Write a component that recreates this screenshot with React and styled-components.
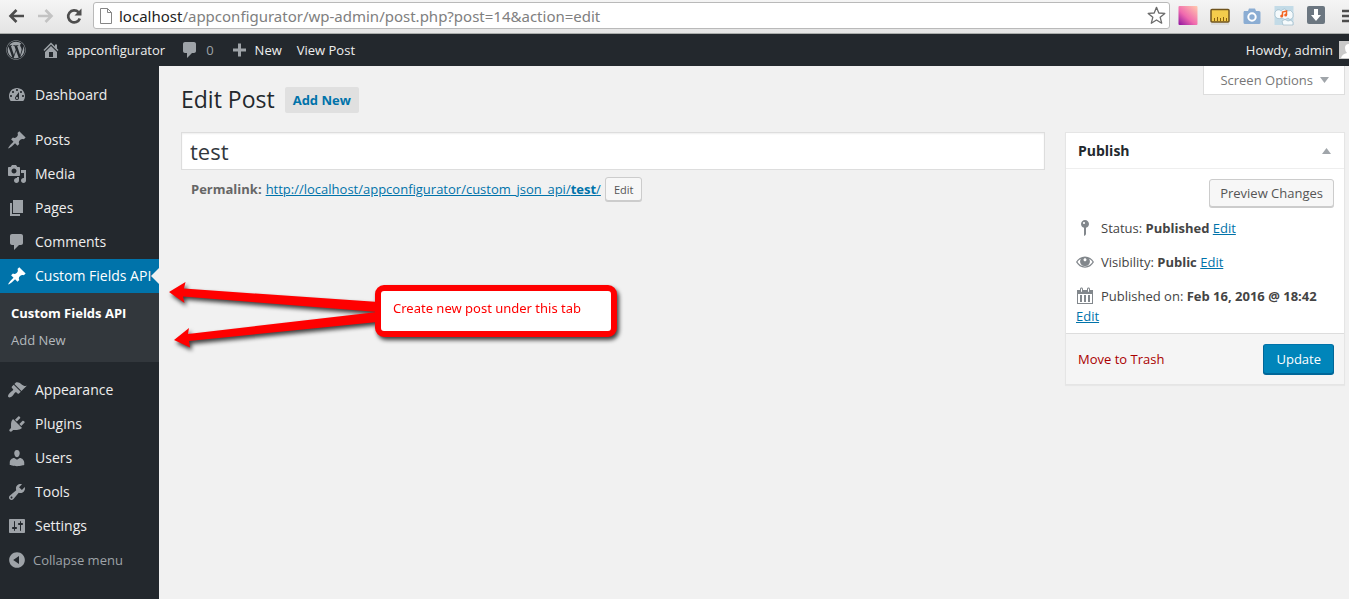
import { useState } from "react"
import styled, { createGlobalStyle } from "styled-components"
import { FaWordpress } from "react-icons/fa"

const GlobalStyle = createGlobalStyle`
  * {
    box-sizing: border-box;
  }

  body {
    margin: 0;
    background: #f1f1f1;
    color: #444;
    font-family: "Open Sans", "Noto Sans", sans-serif;
    font-size: 13px;
    line-height: 20px;
    overflow-x: hidden;
  }

  button, input {
    font-family: inherit;
  }

  svg {
    display: block;
    flex: none;
  }
`

const Page = styled.div`
  display: flex;
  flex-direction: column;
  min-height: 100vh;
`

/* browser toolbar */

const BrowserBar = styled.div`
  display: flex;
  align-items: center;
  height: 34px;
  padding: 0 0 2px 6px;
  background: linear-gradient(#f5f5f5, #e4e4e4);
  border-bottom: 1px solid #a9acaa;
  overflow: hidden;
`

const NavButtons = styled.div`
  display: flex;
  gap: 9px;
  margin-right: 9px;
`

const IconButton = styled.button`
  display: flex;
  padding: 0;
  border: 0;
  background: none;
`

const AddressBar = styled.div`
  display: flex;
  flex: 1;
  align-items: center;
  height: 27px;
  padding: 0 3px 0 5px;
  border: 1px solid #b9b9b9;
  border-radius: 3px;
  background: #fff;
`

const Address = styled.div`
  flex: 1;
  margin-left: 6px;
  color: #808080;
  font-family: "Noto Sans", "Open Sans", sans-serif;
  font-size: 15px;
  line-height: 24px;
  white-space: nowrap;
  outline: 0;
`

const Host = styled.span`
  color: #222;
`

const Extensions = styled.div`
  display: flex;
  gap: 12px;
  width: 179px;
  padding-left: 8px;
`

/* admin bar */

const AdminBar = styled.nav`
  display: flex;
  align-items: center;
  height: 32px;
  background: #23282d;
  overflow: hidden;
`

const BarLink = styled.a`
  display: flex;
  align-items: center;
  gap: 6px;
  padding: 0 8px 0 7px;
  color: ${(props) => (props.$muted ? "#9ea3a8" : "#eee")};
  line-height: 32px;
  text-decoration: none;

  svg {
    color: #9ea3a8;
  }
`

const LogoLink = styled(BarLink)`
  padding: 0 8px 0 6px;
`

const Account = styled(BarLink)`
  margin-left: auto;
  padding-right: 0;
`

/* side menu */

const Body = styled.div`
  display: flex;
  flex: 1;
`

const SideMenu = styled.nav`
  flex: none;
  width: 159px;
  padding: 12px 0;
  background: #23282d;
`

const MenuGroup = styled.div`
  margin-bottom: 11px;
`

const MenuLink = styled.a`
  position: relative;
  display: flex;
  align-items: center;
  gap: 8px;
  height: 34px;
  padding-left: 7px;
  background: ${(props) => (props.$active ? "#0073aa" : "transparent")};
  color: ${(props) => (props.$active ? "#fff" : "#eee")};
  font-size: 14px;
  text-decoration: none;
  white-space: nowrap;

  svg {
    color: ${(props) => (props.$active ? "#fff" : "#9ea3a8")};
  }
`

const ActiveMark = styled.span`
  position: absolute;
  top: 9px;
  right: 0;
  border: 8px solid transparent;
  border-left-width: 0;
  border-right-color: #f1f1f1;
`

const SubMenu = styled.div`
  padding: 7px 0 8px;
  background: #32373c;
`

const SubLink = styled.a`
  display: block;
  padding: 0 11px;
  color: ${(props) => (props.$current ? "#fff" : "#b4b9be")};
  font-weight: ${(props) => (props.$current ? 700 : 400)};
  line-height: 27px;
  text-decoration: none;
`

const CollapseButton = styled.button`
  display: flex;
  align-items: center;
  gap: 6px;
  height: 34px;
  padding: 0 0 0 7px;
  border: 0;
  background: none;
  color: #9ea3a8;
  font-size: 13px;
`

/* content */

const Content = styled.main`
  position: relative;
  flex: 1;
  min-width: 0;
  padding: 0 4px 20px 22px;
`

const Header = styled.header`
  display: flex;
  justify-content: space-between;
  align-items: flex-start;
`

const TitleGroup = styled.div`
  display: flex;
  align-items: flex-start;
  gap: 10px;
  padding: 21px 0 19px;
`

const Title = styled.h1`
  margin: 0;
  color: #23282d;
  font-size: 23px;
  font-weight: 400;
  line-height: 24px;
`

const AddNew = styled.a`
  padding: 0 8px;
  border-radius: 2px;
  background: #e0e0e0;
  color: #0073aa;
  font-weight: 700;
  line-height: 26px;
  text-decoration: none;
`

const ScreenOptions = styled.button`
  display: flex;
  align-items: center;
  gap: 7px;
  height: 29px;
  padding: 0 15px 0 16px;
  border: 1px solid #ddd;
  border-top: 0;
  background: #fff;
  color: #777;
  font-size: 13px;
`

const Columns = styled.div`
  display: grid;
  grid-template-columns: minmax(0, 1fr) 280px;
  gap: 20px;
  align-items: start;
`

const TitleInput = styled.input`
  display: block;
  width: 100%;
  height: 38px;
  padding: 3px 8px;
  border: 1px solid #ddd;
  background: #fff;
  box-shadow: inset 0 1px 2px rgba(0, 0, 0, 0.07);
  color: #32373c;
  font-size: 22px;
  outline: 0;
`

const Permalink = styled.div`
  display: flex;
  align-items: center;
  gap: 4px;
  padding: 7px 10px 0;
  color: #666;
`

const Link = styled.a`
  color: #0073aa;
`

const Button = styled.button`
  height: ${(props) => (props.$small ? "24px" : "28px")};
  padding: 0 ${(props) => (props.$small ? "8px" : "10px")};
  border: 1px solid #ccc;
  border-radius: 3px;
  background: #f7f7f7;
  box-shadow: 0 1px 0 #ccc;
  color: #555;
  font-size: ${(props) => (props.$small ? "11px" : "13px")};
`

const PrimaryButton = styled(Button)`
  height: 30px;
  padding: 0 12px;
  border-color: #0073aa #006799 #006799;
  background: #0085ba;
  box-shadow: 0 1px 0 #006799;
  color: #fff;
`

const Box = styled.section`
  border: 1px solid #e5e5e5;
  background: #fff;
  box-shadow: 0 1px 1px rgba(0, 0, 0, 0.04);
`

const BoxHeader = styled.div`
  display: flex;
  justify-content: space-between;
  align-items: center;
  height: 36px;
  padding: 0 13px 0 12px;
  border-bottom: 1px solid #eee;
`

const BoxTitle = styled.h2`
  margin: 0;
  color: #23282d;
  font-size: 14px;
  font-weight: 700;
`

const PreviewRow = styled.div`
  display: flex;
  justify-content: flex-end;
  padding: 10px 10px 5px;
`

const InfoRow = styled.div`
  padding: 6px 10px 8px;

  svg {
    display: inline-block;
    margin: 0 6px 0 -1px;
    color: #82878c;
    vertical-align: top;
  }

  &:last-of-type {
    padding-bottom: 7px;
  }
`

const BoxFooter = styled.footer`
  display: flex;
  justify-content: space-between;
  align-items: center;
  padding: 10px 10px 10px 12px;
  border-top: 1px solid #ddd;
  background: #f5f5f5;
`

const TrashLink = styled.a`
  color: #a00;
  text-decoration: none;
`

/* note drawn over the page */

const Note = styled.div`
  position: absolute;
  top: 212px;
  left: 6px;
  display: flex;
  filter: drop-shadow(2px 3px 2px rgba(0, 0, 0, 0.75));
`

const NoteText = styled.div`
  width: 242px;
  height: 52px;
  margin-top: 7px;
  padding: 7px 12px;
  border: 6px solid #f00;
  border-radius: 9px;
  background: #fff;
  color: #f00;
  font-family: "Noto Sans", "Open Sans", sans-serif;
`

const icons = {
  dashboard: "M3.76 16h12.48c1.1-1.37 1.76-3.11 1.76-5 0-4.42-3.58-8-8-8s-8 3.58-8 8c0 1.89.66 3.63 1.76 5zM10 4c.55 0 1 .45 1 1s-.45 1-1 1-1-.45-1-1 .45-1 1-1zM6 6c.55 0 1 .45 1 1s-.45 1-1 1-1-.45-1-1 .45-1 1-1zm8 0c.55 0 1 .45 1 1s-.45 1-1 1-1-.45-1-1 .45-1 1-1zm-5.37 5.55L12 7v6c0 1.1-.9 2-2 2s-2-.9-2-2c0-.57.24-1.08.63-1.45zM4 10c.55 0 1 .45 1 1s-.45 1-1 1-1-.45-1-1 .45-1 1-1zm12 0c.55 0 1 .45 1 1s-.45 1-1 1-1-.45-1-1 .45-1 1-1zm-5 3c0-.55-.45-1-1-1s-1 .45-1 1 .45 1 1 1 1-.45 1-1z",
  pin: "M10.44 3.02l1.82-1.82 6.36 6.35-1.83 1.82c-1.05-.68-2.48-.57-3.41.36l-.75.75c-.92.93-1.04 2.35-.35 3.41l-1.83 1.82-2.41-2.41-2.8 2.79c-.42.42-3.38 2.71-3.8 2.29s1.86-3.39 2.28-3.81l2.79-2.79L4.1 9.36l1.83-1.82c1.05.69 2.48.57 3.4-.36l.75-.75c.93-.92 1.05-2.35.36-3.41z",
  media: "M13 11V4c0-.55-.45-1-1-1h-1.67L9 1H5L3.67 3H2c-.55 0-1 .45-1 1v7c0 .55.45 1 1 1h10c.55 0 1-.45 1-1zM7 4.5c1.38 0 2.5 1.12 2.5 2.5S8.38 9.5 7 9.5 4.5 8.38 4.5 7 5.62 4.5 7 4.5zM14 6h5v10.5c0 1.38-1.12 2.5-2.5 2.5S14 17.88 14 16.5s1.12-2.5 2.5-2.5c.17 0 .34.02.5.05V9h-3V6zm-4 8.05V13h2v3.5c0 1.38-1.12 2.5-2.5 2.5S7 17.88 7 16.5 8.12 14 9.5 14c.17 0 .34.02.5.05z",
  page: "M6 15V2h10v13H6zm-1 1h8v2H3V5h2v11z",
  comment: "M5 2h9c1.1 0 2 .9 2 2v7c0 1.1-.9 2-2 2h-2l-5 5v-5H5c-1.1 0-2-.9-2-2V4c0-1.1.9-2 2-2z",
  appearance: "M14.48 11.06L7.41 3.99l1.5-1.5c.5-.56 2.3-.47 3.51.32 1.21.8 1.43 1.28 2.91 2.1 1.18.64 2.45 1.26 4.45.85zm-.71.71L6.7 4.7 4.93 6.47c-.39.39-.39 1.02 0 1.41l1.06 1.06c.39.39.39 1.03 0 1.42-.6.6-1.43 1.11-2.21 1.69-.35.26-.7.53-1.01.84C1.43 14.23.4 16.08 1.4 17.07c.99 1 2.84-.03 4.18-1.36.31-.31.58-.66.85-1.02.57-.78 1.08-1.61 1.69-2.21.39-.39 1.02-.39 1.41 0l1.06 1.06c.39.39 1.02.39 1.41 0z",
  plugin: "M13.11 4.36L9.87 7.6 8 5.73l3.24-3.24c.35-.34 1.05-.2 1.56.32.52.51.66 1.21.31 1.55zm-8 1.77l.91-1.12 9.01 9.01-1.19.84c-.71.71-2.63 1.16-3.82 1.16H6.14L4.9 17.26c-.59.59-1.54.59-2.12 0-.59-.58-.59-1.53 0-2.12l1.24-1.24v-3.88c0-1.13.4-3.19 1.09-3.89zm7.26 3.97l3.24-3.24c.34-.35 1.04-.21 1.55.31.52.51.66 1.21.31 1.55l-3.24 3.25z",
  users: "M10 9.25c-2.27 0-2.73-3.44-2.73-3.44C7 4.02 7.82 2 9.97 2c2.16 0 2.98 2.02 2.71 3.81 0 0-.41 3.44-2.68 3.44zm0 2.57L12.72 10c2.39 0 4.52 2.33 4.52 4.53v2.49s-3.65 1.13-7.24 1.13c-3.65 0-7.24-1.13-7.24-1.13v-2.49c0-2.25 1.94-4.48 4.47-4.48z",
  tools: "M16.68 9.77c-1.34 1.34-3.3 1.67-4.95.99l-5.41 6.52c-.99.99-2.59.99-3.58 0s-.99-2.59 0-3.57l6.52-5.42c-.68-1.65-.35-3.61.99-4.95 1.28-1.28 3.12-1.62 4.72-1.06l-2.89 2.89 2.82 2.82 2.86-2.87c.53 1.58.18 3.39-1.08 4.65zM3.81 16.21c.4.39 1.04.39 1.43 0 .4-.4.4-1.04 0-1.43-.39-.4-1.03-.4-1.43 0-.39.39-.39 1.03 0 1.43z",
  settings: "M18 16V4c0-.55-.45-1-1-1H3c-.55 0-1 .45-1 1v12c0 .55.45 1 1 1h14c.55 0 1-.45 1-1zM8 11h1c.55 0 1 .45 1 1s-.45 1-1 1H8v1.5c0 .28-.22.5-.5.5s-.5-.22-.5-.5V13H6c-.55 0-1-.45-1-1s.45-1 1-1h1V5.5c0-.28.22-.5.5-.5s.5.22.5.5V11zm5-2h-1c-.55 0-1-.45-1-1s.45-1 1-1h1V5.5c0-.28.22-.5.5-.5s.5.22.5.5V7h1c.55 0 1 .45 1 1s-.45 1-1 1h-1v5.5c0 .28-.22.5-.5.5s-.5-.22-.5-.5V9z",
  collapse: "M10 2.16c4.33 0 7.84 3.51 7.84 7.84s-3.51 7.84-7.84 7.84S2.16 14.33 2.16 10 5.71 2.16 10 2.16zm2 11.72V6.12L6.18 9.97z",
  home: "M16 8.5l1.53 1.53-1.06 1.06L10 4.6l-6.47 6.49-1.06-1.06L10 2.5l4 4v-2h2v4zm-6-2.46l6 5.99V18H4v-5.97zM12 17v-5H8v5h4z",
  plus: "M17 8.5v3h-5v5H9v-5H4v-3h5v-5h3v5z",
  status: "M14 6c0 1.86-1.28 3.41-3 3.86V16c0 1-2 2-2 2V9.86c-1.72-.45-3-2-3-3.86 0-2.21 1.79-4 4-4s4 1.79 4 4zM8 5c0 .55.45 1 1 1s1-.45 1-1-.45-1-1-1-1 .45-1 1z",
  eye: "M10 4.5c4 0 7 2.3 9 5.5-2 3.5-5 5.7-9 5.7S3 13.5 1 10c2-3.2 5-5.5 9-5.5zM5.9 6.8C4.4 7.6 3.2 8.8 2.5 10c1.7 2.6 4.3 4.4 7.5 4.4s5.8-1.8 7.5-4.4c-.7-1.2-1.9-2.4-3.4-3.2.5.8.8 1.7.8 2.6 0 2.7-2.2 4.7-4.9 4.7s-4.9-2-4.9-4.7c0-.9.3-1.8.8-2.6zM10 6.3c-.8 0-1.5.7-1.5 1.5S9.2 9.3 10 9.3s1.5-.7 1.5-1.5S10.8 6.3 10 6.3z",
  calendar: "M15 4h3v14H2V4h3V3c0-.83.67-1.5 1.5-1.5S8 2.17 8 3v1h4V3c0-.83.67-1.5 1.5-1.5S15 2.17 15 3v1zM6 3v2.5c0 .28.22.5.5.5s.5-.22.5-.5V3c0-.28-.22-.5-.5-.5S6 2.72 6 3zm7 0v2.5c0 .28.22.5.5.5s.5-.22.5-.5V3c0-.28-.22-.5-.5-.5s-.5.22-.5.5zm4 14V8H3v9h14zM7 16V9H5v7h2zm4 0V9H9v7h2zm4 0V9h-2v7h2z",
}

const firstMenu = [
  { icon: "pin", label: "Posts" },
  { icon: "media", label: "Media" },
  { icon: "page", label: "Pages" },
  { icon: "comment", label: "Comments" },
]

const lastMenu = [
  { icon: "appearance", label: "Appearance" },
  { icon: "plugin", label: "Plugins" },
  { icon: "users", label: "Users" },
  { icon: "tools", label: "Tools" },
  { icon: "settings", label: "Settings" },
]

function Icon({ name }) {
  return (
    <svg width="20" height="20" viewBox="0 0 20 20" fill="currentColor" fillRule="evenodd" aria-hidden="true">
      <path d={icons[name]} />
    </svg>
  )
}

function Triangle({ up }) {
  return (
    <svg width="9" height="6" viewBox="0 0 9 6" fill="#a0a5aa" aria-hidden="true">
      <path d={up ? "M4.5 0L9 6H0z" : "M0 0h9L4.5 6z"} />
    </svg>
  )
}

function Browser() {
  return (
    <BrowserBar>
      <NavButtons>
        <IconButton aria-label="Back">
          <svg width="20" height="20" viewBox="0 0 20 20" fill="none" stroke="#4d4d4d" strokeWidth="2.6">
            <path d="M18 10H5M10.5 4L4.5 10l6 6" />
          </svg>
        </IconButton>
        <IconButton aria-label="Forward">
          <svg width="20" height="20" viewBox="0 0 20 20" fill="none" stroke="#c3c3c3" strokeWidth="2.6">
            <path d="M3 10h13M10.5 4l6 6-6 6" />
          </svg>
        </IconButton>
        <IconButton aria-label="Reload">
          <svg width="20" height="20" viewBox="0 0 20 20">
            <path d="M14.5 6.2A6 6 0 1 0 15.8 12.5" fill="none" stroke="#4d4d4d" strokeWidth="2.7" />
            <path d="M17.5 2.5v7h-7z" fill="#4d4d4d" />
          </svg>
        </IconButton>
      </NavButtons>
      <AddressBar>
        <svg width="14" height="18" viewBox="0 0 14 18" fill="#fff" stroke="#858585">
          <path d="M1.5 1.5h7l4 4v11h-11zM8.5 1.5v4h4" />
        </svg>
        <Address role="textbox" aria-label="Address" contentEditable suppressContentEditableWarning spellCheck={false}>
          <Host>localhost</Host>/appconfigurator/wp-admin/post.php?post=14&amp;action=edit
        </Address>
        <IconButton aria-label="Bookmark this page">
          <svg width="19" height="19" viewBox="0 0 19 19" fill="#fff" stroke="#6b6b6b" strokeWidth="1.3" strokeLinejoin="round">
            <path d="M9.5 1.3l2.3 5.7 6 .4-4.6 3.9 1.5 5.9-5.2-3.2-5.2 3.2 1.5-5.9L1.2 7.4l6-.4z" />
          </svg>
        </IconButton>
      </AddressBar>
      <Extensions>
        <IconButton aria-label="Color picker">
          <svg width="20" height="20" viewBox="0 0 20 20">
            <defs>
              <linearGradient id="swatch" x1="0" y1="1" x2="0.9" y2="0">
                <stop offset="0" stopColor="#8d13a0" />
                <stop offset="0.45" stopColor="#f06aae" />
                <stop offset="1" stopColor="#ffc3ad" />
              </linearGradient>
            </defs>
            <rect x="0.5" y="0" width="19" height="19" rx="1" fill="url(#swatch)" />
          </svg>
        </IconButton>
        <IconButton aria-label="Ruler">
          <svg width="20" height="20" viewBox="0 0 20 20">
            <path d="M1 18h18" stroke="#ccc" />
            <rect x="1" y="3.5" width="18" height="12.5" rx="1" fill="#f4cc4c" stroke="#6f531c" strokeWidth="1.5" />
            <path d="M4.5 15v-3M7.5 15v-4M10.5 15v-3M13.5 15v-4M16.5 15v-3" stroke="#8a5f10" />
          </svg>
        </IconButton>
        <IconButton aria-label="Screenshot">
          <svg width="20" height="20" viewBox="0 0 20 20">
            <path d="M2 5h4l1-2.5h6L14 5h3a1.5 1.5 0 0 1 1.5 1.5v10A1.5 1.5 0 0 1 17 18H3a1.5 1.5 0 0 1-1.5-1.5v-10z" fill="#8badd3" />
            <circle cx="10" cy="11" r="3.7" fill="#8badd3" stroke="#fff" strokeWidth="2" />
          </svg>
        </IconButton>
        <IconButton aria-label="Music cloud">
          <svg width="20" height="20" viewBox="0 0 20 20">
            <rect x="0.5" y="0" width="19" height="19" fill="#c3dbe7" />
            <path d="M1 6q3-4 6-1 4-4 6 0 4-2 6 2v4q-2 4-5 1-3 3-6 0-5 2-7-2zM8 15q3-3 6 0 3-2 5 1v3H9z" fill="#f5fafc" stroke="#8eafc0" strokeWidth="0.6" />
            <path d="M8.5 10V6l4-1v4" fill="none" stroke="#f26522" strokeWidth="1.5" />
            <circle cx="7.7" cy="10" r="1.5" fill="#f26522" />
            <circle cx="11.7" cy="9" r="1.5" fill="#f26522" />
          </svg>
        </IconButton>
        <IconButton aria-label="Downloads">
          <svg width="20" height="20" viewBox="0 0 20 20">
            <rect x="1" y="0" width="18" height="18" rx="2" fill="#6b7680" />
            <path d="M8 3h4v6h3l-5 6-5-6h3z" fill="#fff" />
          </svg>
        </IconButton>
        <IconButton aria-label="Browser menu">
          <svg width="20" height="20" viewBox="0 0 20 20" stroke="#4d4d4d" strokeWidth="2.5">
            <path d="M4 5h14M4 10h14M4 15h14" />
          </svg>
        </IconButton>
      </Extensions>
    </BrowserBar>
  )
}

function MenuItem({ icon, label, active }) {
  return (
    <MenuLink href="#" $active={active}>
      <Icon name={icon} />
      {label}
      {active && <ActiveMark />}
    </MenuLink>
  )
}

function Menu() {
  return (
    <SideMenu>
      <MenuGroup>
        <MenuItem icon="dashboard" label="Dashboard" />
      </MenuGroup>
      <MenuGroup>
        {firstMenu.map((item) => (
          <MenuItem key={item.label} {...item} />
        ))}
        <MenuItem icon="pin" label="Custom Fields API" active />
        <SubMenu>
          <SubLink href="#" $current>Custom Fields API</SubLink>
          <SubLink href="#">Add New</SubLink>
        </SubMenu>
      </MenuGroup>
      {lastMenu.map((item) => (
        <MenuItem key={item.label} {...item} />
      ))}
      <CollapseButton>
        <Icon name="collapse" />
        Collapse menu
      </CollapseButton>
    </SideMenu>
  )
}

function PublishBox() {
  return (
    <Box>
      <BoxHeader>
        <BoxTitle>Publish</BoxTitle>
        <IconButton aria-label="Toggle panel">
          <Triangle up />
        </IconButton>
      </BoxHeader>
      <PreviewRow>
        <Button>Preview Changes</Button>
      </PreviewRow>
      <InfoRow>
        <Icon name="status" />
        Status: <b>Published</b> <Link href="#">Edit</Link>
      </InfoRow>
      <InfoRow>
        <Icon name="eye" />
        Visibility: <b>Public</b> <Link href="#">Edit</Link>
      </InfoRow>
      <InfoRow>
        <Icon name="calendar" />
        Published on: <b>Feb 16, 2016 @ 18:42</b> <Link href="#">Edit</Link>
      </InfoRow>
      <BoxFooter>
        <TrashLink href="#">Move to Trash</TrashLink>
        <PrimaryButton>Update</PrimaryButton>
      </BoxFooter>
    </Box>
  )
}

function App() {
  const [title, setTitle] = useState("test")

  return (
    <Page>
      <GlobalStyle />
      <Browser />
      <AdminBar>
        <LogoLink href="#" aria-label="About WordPress">
          <FaWordpress size={20} />
        </LogoLink>
        <BarLink href="#"><Icon name="home" />appconfigurator</BarLink>
        <BarLink href="#" $muted><Icon name="comment" />0</BarLink>
        <BarLink href="#"><Icon name="plus" />New</BarLink>
        <BarLink href="#">View Post</BarLink>
        <Account href="#">
          Howdy, admin
          <svg width="10" height="18" viewBox="0 0 10 18">
            <path d="M0 0h10v18H0z" fill="#c9c9c9" />
            <path d="M10 3a4 4 0 0 0-4 4q0 3 2 5-5 1-6 5h8z" fill="#fff" />
          </svg>
        </Account>
      </AdminBar>
      <Body>
        <Menu />
        <Content>
          <Header>
            <TitleGroup>
              <Title>Edit Post</Title>
              <AddNew href="#">Add New</AddNew>
            </TitleGroup>
            <ScreenOptions>
              Screen Options
              <Triangle />
            </ScreenOptions>
          </Header>
          <Columns>
            <div>
              <TitleInput aria-label="Post title" value={title} onChange={(e) => setTitle(e.target.value)} />
              <Permalink>
                <b>Permalink:</b>
                <Link href="#">http://localhost/appconfigurator/custom_json_api/<b>test</b>/</Link>
                <Button $small>Edit</Button>
              </Permalink>
            </div>
            <PublishBox />
          </Columns>
          <Note>
            <svg width="210" height="80" viewBox="0 0 210 80" fill="#f00">
              <path d="M4 14L20.5 4l-1.5 6.5L212 24v10L18 18.5l1.5 6.5z" />
              <path d="M9 62L24 50l-1 6L212 34v10L24 63l1 6.5z" />
            </svg>
            <NoteText>Create new post under this tab</NoteText>
          </Note>
        </Content>
      </Body>
    </Page>
  )
}

export default App
